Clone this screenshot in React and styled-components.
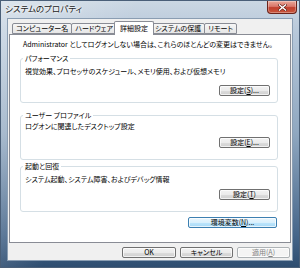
import React from 'react';
import styled, { createGlobalStyle } from 'styled-components';

const GlobalStyle = createGlobalStyle`
  html, body {
    margin: 0;
    padding: 0;
    width: 300px;
    height: 268px;
    overflow: hidden;
    background: #fff;
  }
  body {
    font-family: "Noto Sans CJK JP", "Noto Sans", sans-serif;
    font-feature-settings: "palt";
    color: #000;
  }
`;

const Window = styled.div`
  width: 300px;
  height: 268px;
  box-sizing: border-box;
  display: flex;
  flex-direction: column;
  border: 1px solid #4a5f78;
  background:
    linear-gradient(110deg, rgba(255, 255, 255, 0.35) 0%, rgba(255, 255, 255, 0) 35%),
    linear-gradient(180deg, #cbd7e3 0%, #b7c8da 12%, #8fa7c0 50%, #46668a 88%, #2e4d70 100%);
`;

const TitleBar = styled.div`
  height: 17px;
  display: flex;
  align-items: flex-start;
  justify-content: space-between;
  padding-left: 4px;
`;

const TitleText = styled.div`
  font-size: 8.5px;
  line-height: 9px;
  margin-top: 3px;
  color: #1a1a1a;
  text-shadow: 0 0 3px #fff, 0 0 3px #fff;
`;

const CloseButton = styled.div`
  width: 30px;
  height: 13px;
  margin-right: 2px;
  box-sizing: border-box;
  border: 1px solid #6b231a;
  border-top: none;
  border-radius: 0 0 4px 4px;
  display: flex;
  align-items: center;
  justify-content: center;
  background: linear-gradient(180deg, #e9a899 0%, #d9776a 45%, #c0402e 55%, #c8553b 100%);
  box-shadow: inset 0 0 0 1px rgba(255, 255, 255, 0.3);
`;

const Client = styled.div`
  flex: 1;
  margin: 0 6px 6px;
  box-sizing: border-box;
  border: 1px solid #8a9db2;
  background: #f0f0f0;
  padding: 2px 1px;
  display: flex;
  flex-direction: column;
`;

const TabRow = styled.div`
  height: 13px;
  display: flex;
  align-items: flex-end;
  padding-left: 3px;
`;

const Tab = styled.div`
  position: relative;
  box-sizing: border-box;
  height: ${p => (p.$active ? '14px' : '11px')};
  margin: ${p => (p.$active ? '0 -2px -1px -3px' : '0 0 0 -1px')};
  padding: 0 ${p => (p.$active ? '5px' : '3px')};
  border: 1px solid #898c95;
  border-bottom: ${p => (p.$active ? 'none' : '1px solid #898c95')};
  border-radius: 2px 2px 0 0;
  background: ${p => (p.$active ? '#fff' : 'linear-gradient(180deg, #f6f6f6 0%, #e6e6e6 100%)')};
  z-index: ${p => (p.$active ? 2 : 0)};
  font-size: 7px;
  line-height: ${p => (p.$active ? '12px' : '9px')};
  white-space: nowrap;
  &:first-child {
    margin-left: 0;
  }
`;

const Panel = styled.div`
  flex: 1;
  position: relative;
  z-index: 1;
  box-sizing: border-box;
  border: 1px solid #898c95;
  background: #fff;
  padding: 5px 12px 0 10px;
  display: flex;
  flex-direction: column;
`;

const Note = styled.div`
  font-size: 7px;
  line-height: 8px;
  margin-left: 3px;
  white-space: nowrap;
`;

const Group = styled.div`
  position: relative;
  box-sizing: border-box;
  height: ${p => p.$height}px;
  margin-top: ${p => p.$top}px;
  border: 1px solid #d5dfe5;
  border-radius: 3px;
  padding: ${p => p.$pad}px 7px 0 4px;
  display: flex;
  flex-direction: column;
`;

const GroupLabel = styled.span`
  position: absolute;
  top: -5px;
  left: 2px;
  padding: 0 2px;
  background: #fff;
  font-size: 7px;
  line-height: 8px;
  white-space: nowrap;
`;

const GroupText = styled.div`
  font-size: 7px;
  line-height: 8px;
  white-space: nowrap;
`;

const Button = styled.div`
  box-sizing: border-box;
  width: ${p => p.$width || 51}px;
  height: 11px;
  margin-top: ${p => p.$top || 0}px;
  align-self: flex-end;
  border: 1px solid ${p => (p.$disabled ? '#adb2b5' : p.$default ? '#3c7fb1' : '#707070')};
  border-radius: 2px;
  background: ${p =>
    p.$disabled
      ? '#f4f4f4'
      : p.$default
      ? 'linear-gradient(180deg, #eaf6fd 0%, #d9f0fc 50%, #bee6fd 51%, #a7d9f5 100%)'
      : 'linear-gradient(180deg, #f2f2f2 0%, #ebebeb 50%, #dddddd 51%, #cfcfcf 100%)'};
  box-shadow: inset 0 0 0 1px rgba(255, 255, 255, 0.7);
  color: ${p => (p.$disabled ? '#838383' : '#000')};
  font-size: 7px;
  line-height: 9px;
  text-align: center;
  white-space: nowrap;
  u {
    text-decoration: underline;
  }
`;

const WideButton = styled(Button)`
  margin-right: 1px;
`;

const ButtonRow = styled.div`
  height: 11px;
  margin-top: 4px;
  display: flex;
  justify-content: flex-end;
  gap: 4px;
  padding-right: 1px;
`;

const CloseIcon = () => (
  <svg width="9" height="7" viewBox="0 0 9 7">
    <path d="M1.5 1 L7.5 6 M7.5 1 L1.5 6" stroke="#5a1a12" strokeWidth="2.6" strokeLinecap="square" />
    <path d="M1.5 1 L7.5 6 M7.5 1 L1.5 6" stroke="#fff" strokeWidth="1.5" strokeLinecap="square" />
  </svg>
);

const tabs = ['コンピューター名', 'ハードウェア', '詳細設定', 'システムの保護', 'リモート'];

const groups = [
  {
    label: 'パフォーマンス',
    text: '視覚効果、プロセッサのスケジュール、メモリ使用、および仮想メモリ',
    button: <>設定(<u>S</u>)...</>,
    height: 45, top: 10, pad: 8, btnTop: 10
  },
  {
    label: 'ユーザー プロファイル',
    text: 'ログオンに関連したデスクトップ設定',
    button: <>設定(<u>E</u>)...</>,
    height: 45, top: 12, pad: 6, btnTop: 7
  },
  {
    label: '起動と回復',
    text: 'システム起動、システム障害、およびデバッグ情報',
    button: <>設定(<u>T</u>)</>,
    height: 46, top: 6, pad: 8, btnTop: 6
  }
];

const App = () => (
  <>
    <GlobalStyle />
    <Window>
      <TitleBar>
        <TitleText>システムのプロパティ</TitleText>
        <CloseButton><CloseIcon /></CloseButton>
      </TitleBar>
      <Client>
        <TabRow>
          {tabs.map(t => (
            <Tab key={t} $active={t === '詳細設定'}>{t}</Tab>
          ))}
        </TabRow>
        <Panel>
          <Note>Administrator としてログオンしない場合は、これらのほとんどの変更はできません。</Note>
          {groups.map(g => (
            <Group key={g.label} $height={g.height} $top={g.top} $pad={g.pad}>
              <GroupLabel>{g.label}</GroupLabel>
              <GroupText>{g.text}</GroupText>
              <Button $top={g.btnTop}>{g.button}</Button>
            </Group>
          ))}
          <WideButton $default $width={89} $top={5}>環境変数(<u>N</u>)...</WideButton>
        </Panel>
        <ButtonRow>
          <Button $width={54}>OK</Button>
          <Button $width={53}>キャンセル</Button>
          <Button $width={53} $disabled>適用(<u>A</u>)</Button>
        </ButtonRow>
      </Client>
    </Window>
  </>
);

export default App;
